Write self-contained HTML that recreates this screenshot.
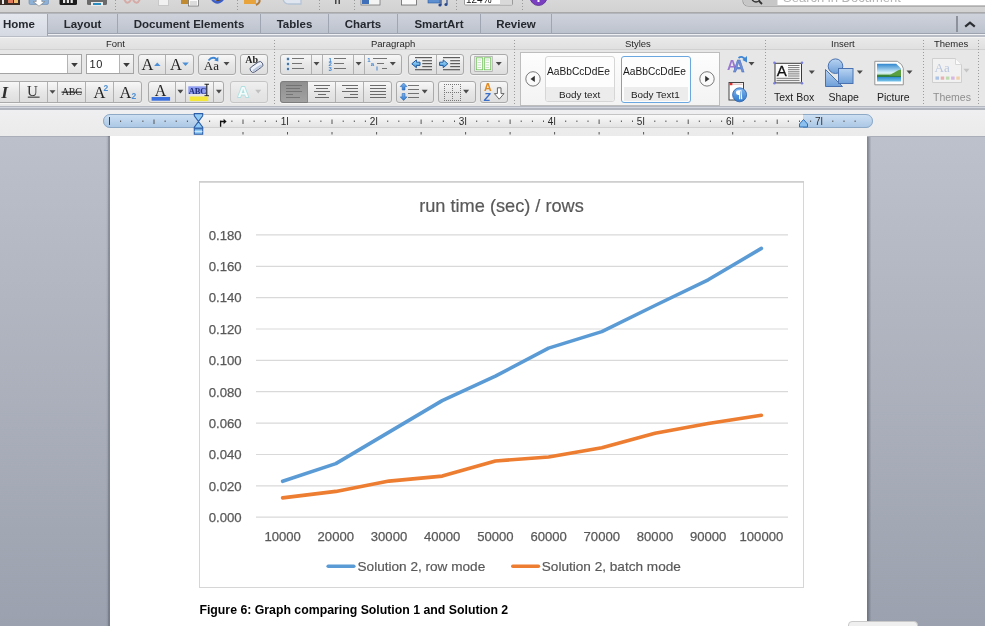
<!DOCTYPE html>
<html><head><meta charset="utf-8"><style>
*{margin:0;padding:0;box-sizing:border-box}
html,body{width:985px;height:626px;overflow:hidden;background:#e9e9e9;font-family:"Liberation Sans",sans-serif}
.a{position:absolute}
#wrap{position:absolute;left:0;top:0;width:985px;height:626px;overflow:hidden;will-change:transform;background:#e9e9e9}
#toolbar{left:0;top:0;width:985px;height:13px;background:linear-gradient(#d8d8d8,#d2d2d2);border-bottom:1px solid #a9a9a9}
#tabs{left:0;top:13px;width:985px;height:21px;background:linear-gradient(#ced2db,#bdc3ce);border-top:1px solid #b3b6bc;border-bottom:1px solid #9ea4af}
#tabunder{left:0;top:34px;width:985px;height:3px;background:linear-gradient(#eef0f4 0 1px,#b9bdc5 1px 3px)}
.tab{position:absolute;top:0;height:20px;font-weight:bold;font-size:11.5px;color:#25282e;line-height:21px;text-align:center;border-right:1px solid #a0a6b1}
#ribbon{left:0;top:37px;width:985px;height:69px;background:#e7e7e7;border-top:1px solid #f4f4f4}
#rhead{left:0;top:38px;width:985px;height:12px;background:linear-gradient(#e9e9e9,#e0e0e0);border-bottom:1px solid #d0d0d0}
.glab{position:absolute;top:37.7px;font-size:9.5px;color:#262626;line-height:12px;white-space:nowrap}
.btn{position:absolute;border:1px solid #aaaaaa;border-radius:3px;background:linear-gradient(#f7f7f7,#e6e6e6 55%,#dedede);box-shadow:0 1px 0 rgba(255,255,255,.6)}
.press{position:absolute;border:1px solid #7d7d7d;border-radius:3px 0 0 3px;background:linear-gradient(#8f8f8f,#a2a2a2)}
.split{position:absolute;width:1px;background:#b1b1b1}
.sep{position:absolute;top:40px;height:64px;width:1px;background:repeating-linear-gradient(#9c9c9c 0 1px,transparent 1px 3px)}
#ribbonbot{left:0;top:106px;width:985px;height:4px;background:linear-gradient(#b3b8c1 0 1px,#d3d6de 1px 2px,#b0b5be 2px 4px)}
#rulerbar{left:0;top:110px;width:985px;height:26px;background:linear-gradient(#efeff1,#ebebeb)}
#leftgray{left:0;top:136px;width:110px;height:490px;background:linear-gradient(#bcc0ca,#9ba1ae);border-top:1px solid #a9aeb8}
#rightgray{left:867px;top:136px;width:118px;height:490px;background:linear-gradient(90deg,rgba(60,64,76,.48),rgba(60,64,76,.36) 1.5px,rgba(60,64,76,.16) 3px,rgba(60,64,76,0) 4.5px),linear-gradient(#bdc1cb,#9ba1ae);border-top:1px solid #a9aeb8}
#page{left:110px;top:136px;width:757px;height:490px;background:#fff}
.lbl{position:absolute;font-size:10.5px;color:#1e1e1e;white-space:nowrap;line-height:12px}
</style></head><body><div id="wrap">
<div id="toolbar" class="a"></div>
<svg class="a" style="left:0;top:0" width="985" height="13" viewBox="0 0 985 13"><rect x="-1" y="-2" width="21" height="7" fill="#3a2e26"/><rect x="2" y="-2" width="2" height="6" fill="#e8e8e8"/><rect x="8" y="-2" width="5" height="5" fill="#e27a5d"/><rect x="14" y="-2" width="4" height="5" fill="#f0c070"/><rect x="29" y="-2" width="19.5" height="6.5" rx="1.5" fill="#8db0d6" stroke="#6a8ab0" stroke-width=".6"/><path d="M36.2,-2 h5.6 v3.6 h3 l-5.8,4.6 l-5.8,-4.6 h3z" fill="#fdfdfd" stroke="#7a7a7a" stroke-width=".6"/><rect x="59.5" y="-2" width="17.5" height="7" rx="1.5" fill="#1d1d1d"/><rect x="63" y="-2" width="2.2" height="5" fill="#e8e8e8"/><rect x="66.8" y="-2" width="2.2" height="5" fill="#e8e8e8"/><rect x="70.6" y="-2" width="2.2" height="5" fill="#e8e8e8"/><rect x="87" y="-2" width="20" height="7" rx="1.5" fill="#6b6b6b"/><rect x="91" y="2" width="12" height="4" fill="#eaeaea"/><rect x="93" y="3" width="8" height="2" fill="#2a8cc0"/><line x1="115.5" y1="0" x2="115.5" y2="12" stroke="#9a9a9a" stroke-dasharray="1 2"/><path d="M124,-1 q3,7 7,1 M140,-1 q-3,7 -7,1" stroke="#d6aaa6" stroke-width="2" fill="none"/><rect x="158.5" y="-2" width="10" height="7.5" fill="#f1f1f1" stroke="#c8c8c8"/><rect x="181" y="-2" width="11" height="6" fill="#c08a30"/><rect x="188.5" y="-1" width="10" height="7" fill="#fafafa" stroke="#666" stroke-width=".7"/><line x1="190" y1="2" x2="197" y2="2" stroke="#999" stroke-width=".6"/><line x1="190" y1="4" x2="197" y2="4" stroke="#999" stroke-width=".6"/><path d="M210.5,-1 q7,10 15,-1 l-2,0 q-6,5 -11,1z" fill="#3d5fc8"/><path d="M213,-2 q5,6 10,0z" fill="#5a3a1e"/><line x1="237.5" y1="0" x2="237.5" y2="12" stroke="#9a9a9a" stroke-dasharray="1 2"/><rect x="244" y="-2" width="12" height="6" fill="#e8a43a"/><path d="M258,-2 q4,4 -2,7" stroke="#b07a3a" stroke-width="2" fill="none"/><path d="M283,-1 q1,5 6,5 h12 v-6" stroke="#b5c3d6" stroke-width="1.3" fill="#dfe6ef"/><line x1="319.5" y1="0" x2="319.5" y2="12" stroke="#9a9a9a" stroke-dasharray="1 2"/><rect x="335" y="-2" width="1.5" height="6" fill="#444"/><rect x="338.5" y="-2" width="1.5" height="6" fill="#444"/><line x1="354.5" y1="0" x2="354.5" y2="12" stroke="#9a9a9a" stroke-dasharray="1 2"/><rect x="361" y="-2" width="19" height="7" fill="#f4f4f4" stroke="#777" stroke-width=".8"/><rect x="362" y="-2" width="7" height="6" fill="#3f6fb8"/><rect x="401.5" y="-2" width="15" height="7" fill="#fafafa" stroke="#666" stroke-width=".8"/><rect x="428" y="-2" width="12" height="5" fill="#5c8ed0" stroke="#2a5aa0" stroke-width=".6"/><path d="M441,5 v-7 M447,4 v-7" stroke="#2a4a90" stroke-width="1.2"/><circle cx="440" cy="5" r="1.6" fill="#2a4a90"/><circle cx="446" cy="4.5" r="1.6" fill="#2a4a90"/><line x1="456.5" y1="0" x2="456.5" y2="12" stroke="#9a9a9a" stroke-dasharray="1 2"/><rect x="464.5" y="-3" width="48" height="8" rx="1" fill="#fff" stroke="#9a9a9a"/><rect x="500" y="-2" width="12" height="6.5" fill="#d9d9d9"/><text x="466" y="3" font-size="10" fill="#222" font-family="Liberation Sans">124%</text><line x1="522.5" y1="0" x2="522.5" y2="12" stroke="#9a9a9a" stroke-dasharray="1 2"/><circle cx="538.5" cy="-3" r="8.5" fill="#7a3fc0" stroke="#5a2a90" stroke-width=".8"/><rect x="537.5" y="-2" width="2" height="4" fill="#fff"/><path d="M743,-4 v5 q0,5 6,5 h240 v-10z" fill="#fff" stroke="#8a8a8a" stroke-width="1"/><path d="M743.5,-4 v5 q0,5 6,5 h28 v-10z" fill="#c7c7c7"/><circle cx="756" cy="-2" r="4" fill="none" stroke="#333" stroke-width="1.5"/><line x1="759" y1="1" x2="762" y2="4" stroke="#333" stroke-width="1.8"/><text x="783" y="2" font-size="13" fill="#b5b5b5" font-family="Liberation Sans">Search in Document</text></svg>
<div id="tabs" class="a">
  <div class="tab" style="left:-9px;width:57px;height:22px;background:linear-gradient(#e4e7ee,#d5d9e2);z-index:2">Home</div>
  <div class="tab" style="left:48px;width:70px">Layout</div>
  <div class="tab" style="left:118px;width:143px">Document Elements</div>
  <div class="tab" style="left:261px;width:68px">Tables</div>
  <div class="tab" style="left:329px;width:69px">Charts</div>
  <div class="tab" style="left:398px;width:83px">SmartArt</div>
  <div class="tab" style="left:481px;width:71px">Review</div>
  <div class="a" style="left:956px;top:2px;width:1.5px;height:16px;background:#8c919b"></div>
  <svg class="a" style="left:962px;top:5px" width="16" height="12"><path d="M3.2,7.6 L8,3.6 L12.8,7.6" fill="none" stroke="#2b2e33" stroke-width="2.2"/></svg>
</div>
<div id="tabunder" class="a"></div>
<div id="ribbon" class="a"></div>
<div id="rhead" class="a"></div>
<div class="glab" style="left:106px">Font</div>
<div class="glab" style="left:371px">Paragraph</div>
<div class="glab" style="left:625px">Styles</div>
<div class="glab" style="left:831px">Insert</div>
<div class="glab" style="left:934px">Themes</div>
<div class="sep" style="left:274px"></div>
<div class="sep" style="left:514px"></div>
<div class="sep" style="left:765px"></div>
<div class="sep" style="left:923px"></div>
<div class="sep" style="left:978px"></div>
<div class="a" style="left:-3px;top:54px;width:85px;height:20px;border:1px solid #a4a4a4;background:#fff"></div>
<div class="a" style="left:67px;top:55px;width:14px;height:18px;border-left:1px solid #b4b4b4;background:linear-gradient(#f7f7f7,#e3e3e3)"></div>
<div class="a" style="left:86px;top:54px;width:48px;height:20px;border:1px solid #a4a4a4;background:#fff"></div>
<div class="a" style="left:119px;top:55px;width:14px;height:18px;border-left:1px solid #b4b4b4;background:linear-gradient(#f7f7f7,#e3e3e3)"></div>
<div class="a" style="left:89.5px;top:56.5px;font-size:11px;color:#222;line-height:14px;letter-spacing:.6px">10</div>
<div class="btn" style="left:138px;top:54px;width:56px;height:21px"></div><div class="split" style="left:165px;top:55px;height:19px"></div>
<div class="btn" style="left:198px;top:54px;width:38px;height:21px"></div>
<div class="btn" style="left:240px;top:54px;width:28px;height:21px"></div>
<div class="btn" style="left:280px;top:54px;width:122px;height:21px"></div><div class="split" style="left:311px;top:55px;height:19px"></div><div class="split" style="left:322px;top:55px;height:19px"></div><div class="split" style="left:353px;top:55px;height:19px"></div><div class="split" style="left:364px;top:55px;height:19px"></div>
<div class="btn" style="left:408px;top:54px;width:56px;height:21px"></div><div class="split" style="left:436px;top:55px;height:19px"></div>
<div class="btn" style="left:470px;top:54px;width:38px;height:21px"></div>
<div class="btn" style="left:-4px;top:81px;width:146px;height:22px"></div><div class="split" style="left:19px;top:82px;height:20px"></div><div class="split" style="left:47px;top:82px;height:20px"></div><div class="split" style="left:57px;top:82px;height:20px"></div><div class="split" style="left:85px;top:82px;height:20px"></div><div class="split" style="left:113px;top:82px;height:20px"></div>
<div class="btn" style="left:148px;top:81px;width:76px;height:22px"></div><div class="split" style="left:175px;top:82px;height:20px"></div><div class="split" style="left:185px;top:82px;height:20px"></div><div class="split" style="left:213px;top:82px;height:20px"></div>
<div class="btn" style="left:230px;top:81px;width:38px;height:22px;opacity:.55"></div>
<div class="btn" style="left:280px;top:81px;width:112px;height:22px"></div><div class="press" style="left:280px;top:81px;width:28px;height:22px"></div><div class="split" style="left:335px;top:82px;height:20px"></div><div class="split" style="left:363px;top:82px;height:20px"></div>
<div class="split" style="left:307px;top:82px;height:20px;background:#8a8a8a"></div>
<div class="btn" style="left:396px;top:81px;width:38px;height:22px"></div>
<div class="btn" style="left:438px;top:81px;width:38px;height:22px"></div>
<div class="btn" style="left:480px;top:81px;width:28px;height:22px"></div>
<div class="a" style="left:520px;top:52px;width:200px;height:54px;border:1px solid #bdbdbd;background:linear-gradient(#fdfdfd,#f3f3f3)"></div>
<div class="a" style="left:545px;top:56px;width:70px;height:46px;border:1px solid #d6d6d6;border-radius:3px;background:#fdfdfd;overflow:hidden"><div class="a" style="left:0;top:30px;width:68px;height:15px;background:#ececec"></div></div>
<div class="a" style="left:621px;top:56px;width:70px;height:47px;border:1.5px solid #6aa6e0;border-radius:3px;background:#fdfdfd;overflow:hidden"><div class="a" style="left:2px;top:30px;width:64px;height:14px;background:#ececec"></div></div>
<div class="a" style="left:547px;top:66px;font-size:10.2px;color:#1a1a1a;line-height:12px">AaBbCcDdEe</div>
<div class="a" style="left:623px;top:66px;font-size:10.2px;color:#1a1a1a;line-height:12px">AaBbCcDdEe</div>
<div class="a" style="left:559px;top:89px;font-size:9.9px;color:#222;line-height:12px">Body text</div>
<div class="a" style="left:631px;top:89px;font-size:9.9px;color:#222;line-height:12px">Body Text1</div>
<svg class="a" style="left:0;top:36px" width="985" height="72" viewBox="0 36 985 72"><defs><linearGradient id="gb" x1="0" y1="0" x2="0" y2="1"><stop offset="0" stop-color="#7fb6ef"/><stop offset="1" stop-color="#2d78cc"/></linearGradient><linearGradient id="gcy" x1="0" y1="0" x2="0" y2="1"><stop offset="0" stop-color="#b5e6fb"/><stop offset="1" stop-color="#3a92dc"/></linearGradient><linearGradient id="gsh" x1="0" y1="0" x2="0" y2="1"><stop offset="0" stop-color="#b8d3f2"/><stop offset="1" stop-color="#6e9fd8"/></linearGradient><linearGradient id="gpic" x1="0" y1="0" x2="0" y2="1"><stop offset="0" stop-color="#2f86d0"/><stop offset=".5" stop-color="#d8f1f9"/><stop offset=".58" stop-color="#c4e4d0"/><stop offset=".64" stop-color="#3f8a35"/><stop offset=".74" stop-color="#2a7a48"/><stop offset=".76" stop-color="#3590d0"/><stop offset="1" stop-color="#7cc6ec"/></linearGradient></defs><polygon points="71.2,63.0 77.8,63.0 74.5,67.0" fill="#3a3a3a"/><polygon points="123.2,63.0 129.8,63.0 126.5,67.0" fill="#3a3a3a"/><text x="141.5" y="69.8" font-size="16.5" font-family="Liberation Serif" fill="#222">A</text><polygon points="154.1,66.1 160.6,66.1 157.3,62.5" fill="#4d8fd6"/><text x="170" y="69.8" font-size="16.5" font-family="Liberation Serif" fill="#222">A</text><polygon points="182.2,62.5 188.8,62.5 185.5,66.1" fill="#4d8fd6"/><text x="203.8" y="69.6" font-size="13" font-family="Liberation Serif" fill="#222">Aa</text><path d="M208.5,60.5 q3.5,-4.5 8,-1.5" fill="none" stroke="#3f86d3" stroke-width="1.8"/><polygon points="218.3,56.8 218.3,61.6 214.3,60.6" fill="#3f86d3"/><polygon points="223.5,62.0 229.5,62.0 226.5,65.6" fill="#4a4a4a"/><text x="245.3" y="63.2" font-size="10" font-weight="bold" font-family="Liberation Serif" fill="#222">Ab</text><g transform="rotate(-35 256.5 67)"><rect x="249.5" y="64" width="14" height="6" rx="2.8" fill="#eef2fa" stroke="#4a5570" stroke-width=".9"/><rect x="251" y="67.3" width="11" height="2" rx="1" fill="#b9c7de"/></g><circle cx="288" cy="59" r="2" fill="#cfe6fa"/><circle cx="288" cy="59" r="1.2" fill="#4f7196"/><circle cx="288" cy="64" r="2" fill="#cfe6fa"/><circle cx="288" cy="64" r="1.2" fill="#4f7196"/><circle cx="288" cy="69" r="2" fill="#cfe6fa"/><circle cx="288" cy="69" r="1.2" fill="#4f7196"/><line x1="292" y1="58.5" x2="304" y2="58.5" stroke="#555" stroke-width="1" stroke-opacity=".8"/><line x1="292" y1="63.5" x2="302" y2="63.5" stroke="#555" stroke-width="1" stroke-opacity=".8"/><line x1="292" y1="68.5" x2="304" y2="68.5" stroke="#555" stroke-width="1" stroke-opacity=".8"/><polygon points="313.5,62.0 319.5,62.0 316.5,65.6" fill="#4a4a4a"/><text x="330.2" y="61.5" font-size="6" font-weight="bold" font-family="Liberation Sans" fill="#3f86d3" text-anchor="middle">1</text><text x="330.2" y="66" font-size="6" font-weight="bold" font-family="Liberation Sans" fill="#3f86d3" text-anchor="middle">2</text><text x="330.2" y="70.6" font-size="6" font-weight="bold" font-family="Liberation Sans" fill="#3f86d3" text-anchor="middle">3</text><line x1="334" y1="58.5" x2="346" y2="58.5" stroke="#555" stroke-width="1" stroke-opacity=".8"/><line x1="334" y1="63.5" x2="344" y2="63.5" stroke="#555" stroke-width="1" stroke-opacity=".8"/><line x1="334" y1="68.5" x2="346" y2="68.5" stroke="#555" stroke-width="1" stroke-opacity=".8"/><polygon points="355.6,62.0 361.6,62.0 358.6,65.6" fill="#4a4a4a"/><text x="369" y="61.5" font-size="6" font-weight="bold" font-family="Liberation Sans" fill="#3f86d3" text-anchor="middle">1</text><text x="372.5" y="66" font-size="6" font-weight="bold" font-family="Liberation Sans" fill="#3f86d3" text-anchor="middle">a</text><rect x="376.5" y="66.5" width="1" height="4" fill="#3f86d3"/><line x1="373" y1="58.5" x2="387" y2="58.5" stroke="#555" stroke-width="1" stroke-opacity=".8"/><line x1="377" y1="63.5" x2="384" y2="63.5" stroke="#555" stroke-width="1" stroke-opacity=".8"/><line x1="382" y1="68.5" x2="387" y2="68.5" stroke="#555" stroke-width="1" stroke-opacity=".8"/><polygon points="389.8,62.0 395.8,62.0 392.8,65.6" fill="#4a4a4a"/><line x1="415" y1="57.6" x2="432" y2="57.6" stroke="#5c5c5c" stroke-width="1.2"/><line x1="443" y1="57.6" x2="460" y2="57.6" stroke="#5c5c5c" stroke-width="1.2"/><line x1="415" y1="69.7" x2="432" y2="69.7" stroke="#5c5c5c" stroke-width="1.2"/><line x1="443" y1="69.7" x2="460" y2="69.7" stroke="#5c5c5c" stroke-width="1.2"/><line x1="422.3" y1="60.7" x2="432" y2="60.7" stroke="#5c5c5c" stroke-width="1.2"/><line x1="450.2" y1="60.7" x2="460" y2="60.7" stroke="#5c5c5c" stroke-width="1.2"/><line x1="422.3" y1="63.6" x2="432" y2="63.6" stroke="#5c5c5c" stroke-width="1.2"/><line x1="450.2" y1="63.6" x2="460" y2="63.6" stroke="#5c5c5c" stroke-width="1.2"/><line x1="422.3" y1="66.6" x2="432" y2="66.6" stroke="#5c5c5c" stroke-width="1.2"/><line x1="450.2" y1="66.6" x2="460" y2="66.6" stroke="#5c5c5c" stroke-width="1.2"/><path d="M411.8,63.8 l4.6,-3.9 v2.3 h3.6 v3.2 h-3.6 v2.3z" fill="url(#gcy)" stroke="#1d5aa0" stroke-width="1" stroke-linejoin="round"/><path d="M447.8,63.8 l-4.6,-3.9 v2.3 h-3.6 v3.2 h3.6 v2.3z" fill="url(#gcy)" stroke="#1d5aa0" stroke-width="1" stroke-linejoin="round"/><rect x="474.8" y="56.3" width="17.4" height="15" fill="#fbfbfb" stroke="#9a9a9a" stroke-width=".7"/><rect x="476.3" y="57.8" width="6.4" height="12" fill="none" stroke="#6cbf55" stroke-width=".8"/><rect x="484.3" y="57.8" width="6.4" height="12" fill="none" stroke="#6cbf55" stroke-width=".8"/><line x1="477.5" y1="60" x2="481" y2="60" stroke="#a9cfa0" stroke-width="0.6"/><line x1="485.5" y1="60" x2="489" y2="60" stroke="#a9cfa0" stroke-width="0.6"/><line x1="477.5" y1="62.5" x2="481" y2="62.5" stroke="#a9cfa0" stroke-width="0.6"/><line x1="485.5" y1="62.5" x2="489" y2="62.5" stroke="#a9cfa0" stroke-width="0.6"/><line x1="477.5" y1="65" x2="481" y2="65" stroke="#a9cfa0" stroke-width="0.6"/><line x1="485.5" y1="65" x2="489" y2="65" stroke="#a9cfa0" stroke-width="0.6"/><line x1="477.5" y1="67.5" x2="481" y2="67.5" stroke="#a9cfa0" stroke-width="0.6"/><line x1="485.5" y1="67.5" x2="489" y2="67.5" stroke="#a9cfa0" stroke-width="0.6"/><polygon points="495.8,62.0 501.8,62.0 498.8,65.6" fill="#4a4a4a"/><text x="1.2" y="97.7" font-size="17.5" font-style="italic" font-weight="bold" font-family="Liberation Serif" fill="#2e2e2e">I</text><text x="27" y="95.6" font-size="15" font-family="Liberation Serif" fill="#333">U</text><rect x="27.8" y="96.6" width="11.8" height="1.1" fill="#333"/><polygon points="49.5,90.2 55.5,90.2 52.5,93.8" fill="#4a4a4a"/><text x="61.8" y="95.4" font-size="10" font-family="Liberation Serif" fill="#222" textLength="20">ABC</text><rect x="61.5" y="91.6" width="20.5" height="1.1" fill="#222"/><text x="93.5" y="97.7" font-size="16.5" font-family="Liberation Serif" fill="#222">A</text><text x="103.6" y="90.6" font-size="8.5" font-weight="bold" font-family="Liberation Sans" fill="#4d8fd6">2</text><text x="119.6" y="97.7" font-size="16.5" font-family="Liberation Serif" fill="#222">A</text><text x="131.4" y="98.9" font-size="8.5" font-weight="bold" font-family="Liberation Sans" fill="#4d8fd6">2</text><text x="154.8" y="95.8" font-size="16" font-family="Liberation Serif" fill="#222">A</text><rect x="151.6" y="97" width="18.5" height="3.7" fill="#3a6fe0"/><polygon points="177.4,89.8 183.4,89.8 180.4,93.4" fill="#4a4a4a"/><rect x="188.3" y="86.3" width="18.5" height="7.6" fill="#8d9cf0"/><text x="188.8" y="93.6" font-size="8.5" font-weight="bold" font-family="Liberation Serif" fill="#22307a" textLength="17.5">ABC</text><path d="M204.5,84.3 h4.5 M206.8,84.3 v11.5 M204.5,95.8 h4.5" stroke="#222" stroke-width="1.1" fill="none"/><rect x="189.9" y="96.5" width="18.4" height="4.6" fill="#f3e83a"/><polygon points="215.9,89.8 221.9,89.8 218.9,93.4" fill="#4a4a4a"/><text x="237.8" y="96.5" font-size="15" font-weight="bold" font-family="Liberation Sans" fill="#f4fbfb" stroke="#b2e0e0" stroke-width="1.8" paint-order="stroke">A</text><polygon points="255.2,89.8 261.2,89.8 258.2,93.4" fill="#c0c0c0"/><line x1="286" y1="85.5" x2="302" y2="85.5" stroke="#6a6a6a" stroke-width="1" stroke-opacity=".8"/><line x1="286" y1="88.5" x2="300" y2="88.5" stroke="#6a6a6a" stroke-width="1" stroke-opacity=".8"/><line x1="286" y1="91.5" x2="302" y2="91.5" stroke="#6a6a6a" stroke-width="1" stroke-opacity=".8"/><line x1="286" y1="94.5" x2="293" y2="94.5" stroke="#6a6a6a" stroke-width="1" stroke-opacity=".8"/><line x1="286" y1="97.5" x2="300" y2="97.5" stroke="#6a6a6a" stroke-width="1" stroke-opacity=".8"/><line x1="314" y1="85.5" x2="330" y2="85.5" stroke="#4a4a4a" stroke-width="1" stroke-opacity=".8"/><line x1="316" y1="88.5" x2="328" y2="88.5" stroke="#4a4a4a" stroke-width="1" stroke-opacity=".8"/><line x1="314" y1="91.5" x2="330" y2="91.5" stroke="#4a4a4a" stroke-width="1" stroke-opacity=".8"/><line x1="318" y1="94.5" x2="326" y2="94.5" stroke="#4a4a4a" stroke-width="1" stroke-opacity=".8"/><line x1="315" y1="97.5" x2="329" y2="97.5" stroke="#4a4a4a" stroke-width="1" stroke-opacity=".8"/><line x1="342" y1="85.5" x2="358" y2="85.5" stroke="#4a4a4a" stroke-width="1" stroke-opacity=".8"/><line x1="346" y1="88.5" x2="358" y2="88.5" stroke="#4a4a4a" stroke-width="1" stroke-opacity=".8"/><line x1="342" y1="91.5" x2="358" y2="91.5" stroke="#4a4a4a" stroke-width="1" stroke-opacity=".8"/><line x1="350" y1="94.5" x2="358" y2="94.5" stroke="#4a4a4a" stroke-width="1" stroke-opacity=".8"/><line x1="344" y1="97.5" x2="358" y2="97.5" stroke="#4a4a4a" stroke-width="1" stroke-opacity=".8"/><line x1="370" y1="85.5" x2="386" y2="85.5" stroke="#4a4a4a" stroke-width="1" stroke-opacity=".8"/><line x1="370" y1="88.5" x2="386" y2="88.5" stroke="#4a4a4a" stroke-width="1" stroke-opacity=".8"/><line x1="370" y1="91.5" x2="386" y2="91.5" stroke="#4a4a4a" stroke-width="1" stroke-opacity=".8"/><line x1="370" y1="94.5" x2="386" y2="94.5" stroke="#4a4a4a" stroke-width="1" stroke-opacity=".8"/><line x1="370" y1="97.5" x2="386" y2="97.5" stroke="#4a4a4a" stroke-width="1" stroke-opacity=".8"/><path d="M403.6,83 l3.4,3.6 h-2 v3.4 h-2.8 v-3.4 h-2z" fill="url(#gb)" stroke="#2a6ab8" stroke-width=".6"/><path d="M403.6,100.5 l3.4,-3.6 h-2 v-3.4 h-2.8 v3.4 h-2z" fill="url(#gb)" stroke="#2a6ab8" stroke-width=".6"/><line x1="408" y1="85.5" x2="419" y2="85.5" stroke="#555" stroke-width="1" stroke-opacity=".8"/><line x1="408" y1="89.5" x2="419" y2="89.5" stroke="#555" stroke-width="1" stroke-opacity=".8"/><line x1="408" y1="93.5" x2="419" y2="93.5" stroke="#555" stroke-width="1" stroke-opacity=".8"/><line x1="408" y1="97.5" x2="419" y2="97.5" stroke="#555" stroke-width="1" stroke-opacity=".8"/><polygon points="421.7,89.8 427.7,89.8 424.7,93.4" fill="#4a4a4a"/><g fill="#777"><rect x="444" y="84" width="1" height="1"/><rect x="444" y="86" width="1" height="1"/><rect x="444" y="88" width="1" height="1"/><rect x="444" y="90" width="1" height="1"/><rect x="444" y="92" width="1" height="1"/><rect x="444" y="94" width="1" height="1"/><rect x="444" y="96" width="1" height="1"/><rect x="444" y="98" width="1" height="1"/><rect x="444" y="100" width="1" height="1"/><rect x="446" y="84" width="1" height="1"/><rect x="446" y="92" width="1" height="1"/><rect x="446" y="100" width="1" height="1"/><rect x="448" y="84" width="1" height="1"/><rect x="448" y="92" width="1" height="1"/><rect x="448" y="100" width="1" height="1"/><rect x="450" y="84" width="1" height="1"/><rect x="450" y="92" width="1" height="1"/><rect x="450" y="100" width="1" height="1"/><rect x="452" y="84" width="1" height="1"/><rect x="452" y="86" width="1" height="1"/><rect x="452" y="88" width="1" height="1"/><rect x="452" y="90" width="1" height="1"/><rect x="452" y="92" width="1" height="1"/><rect x="452" y="94" width="1" height="1"/><rect x="452" y="96" width="1" height="1"/><rect x="452" y="98" width="1" height="1"/><rect x="452" y="100" width="1" height="1"/><rect x="454" y="84" width="1" height="1"/><rect x="454" y="92" width="1" height="1"/><rect x="454" y="100" width="1" height="1"/><rect x="456" y="84" width="1" height="1"/><rect x="456" y="92" width="1" height="1"/><rect x="456" y="100" width="1" height="1"/><rect x="458" y="84" width="1" height="1"/><rect x="458" y="92" width="1" height="1"/><rect x="458" y="100" width="1" height="1"/><rect x="460" y="84" width="1" height="1"/><rect x="460" y="86" width="1" height="1"/><rect x="460" y="88" width="1" height="1"/><rect x="460" y="90" width="1" height="1"/><rect x="460" y="92" width="1" height="1"/><rect x="460" y="94" width="1" height="1"/><rect x="460" y="96" width="1" height="1"/><rect x="460" y="98" width="1" height="1"/><rect x="460" y="100" width="1" height="1"/></g><polygon points="463.1,89.8 469.1,89.8 466.1,93.4" fill="#4a4a4a"/><text x="484" y="90.6" font-size="10.5" font-weight="bold" font-family="Liberation Sans" fill="#e08a22">A</text><text x="484" y="100.6" font-size="10.5" font-weight="bold" font-style="italic" font-family="Liberation Sans" fill="#3b6ec8">Z</text><path d="M497.4,87.8 h3.6 v5.8 h3 l-4.8,5.6 l-4.8,-5.6 h3z" fill="#fff" stroke="#555" stroke-width=".9"/><circle cx="533" cy="78.9" r="7.2" fill="#fafafa" stroke="#7a7a7a" stroke-width="1"/><polygon points="530.5,78.9 534.8,75.8 534.8,82" fill="#333"/><circle cx="707" cy="78.9" r="7.2" fill="#fafafa" stroke="#7a7a7a" stroke-width="1"/><polygon points="709.5,78.9 705.2,75.8 705.2,82" fill="#333"/><text x="727" y="69.5" font-size="14" font-weight="bold" font-family="Liberation Sans" fill="#9a78d0">A</text><text x="733" y="72.4" font-size="16" font-weight="bold" font-family="Liberation Sans" fill="#6f8fd8" stroke="#4468b8" stroke-width=".4">A</text><path d="M738.5,58 q4,-3 7.5,2.5" fill="none" stroke="#3f86d3" stroke-width="1.8"/><polygon points="747,56 747,62.5 742.5,60" fill="#3f86d3"/><polygon points="748.5,62.0 754.5,62.0 751.5,65.6" fill="#4a4a4a"/><rect x="729" y="82.5" width="14.5" height="17.5" fill="#fff" stroke="#444" stroke-width="1"/><rect x="729.5" y="83" width="3" height="2.2" fill="#d33"/><line x1="733" y1="84.2" x2="742.5" y2="84.2" stroke="#c88" stroke-width=".6"/><circle cx="739.6" cy="94.8" r="7" fill="url(#gb)" stroke="#2a5eaa" stroke-width=".8"/><path d="M741.5,90.2 h-3.2 a2.4,2.4 0 0 0 0,4.8 h0.8 v4.3 h1.2 v-8.1 h0.8 v8.1 h1.2z" fill="#fff"/><rect x="775" y="63.3" width="26.5" height="19.5" fill="#fafafa" stroke="#3a3a3a" stroke-width="1"/><rect x="776" y="81.8" width="26" height="2" fill="#9a9a9a" opacity=".6"/><text x="776.8" y="76" font-size="15" font-family="Liberation Sans" fill="#111" stroke="#111" stroke-width=".3">A</text><line x1="788" y1="65.5" x2="799.5" y2="65.5" stroke="#555" stroke-width="0.8"/><line x1="788" y1="67.6" x2="799.5" y2="67.6" stroke="#555" stroke-width="0.8"/><line x1="788" y1="69.7" x2="799.5" y2="69.7" stroke="#555" stroke-width="0.8"/><line x1="788" y1="71.8" x2="799.5" y2="71.8" stroke="#555" stroke-width="0.8"/><line x1="788" y1="73.9" x2="799.5" y2="73.9" stroke="#555" stroke-width="0.8"/><line x1="788" y1="76" x2="799.5" y2="76" stroke="#555" stroke-width="0.8"/><line x1="776.5" y1="78.3" x2="799.5" y2="78.3" stroke="#555" stroke-width="0.8"/><line x1="776.5" y1="80.4" x2="799.5" y2="80.4" stroke="#555" stroke-width="0.8"/><circle cx="774.5" cy="62.8" r="1.3" fill="#7b7fe0"/><circle cx="802" cy="62.8" r="1.3" fill="#7b7fe0"/><circle cx="774.5" cy="83.3" r="1.3" fill="#7b7fe0"/><circle cx="802" cy="83.3" r="1.3" fill="#7b7fe0"/><polygon points="808.8,70.5 814.8,70.5 811.8,74.1" fill="#4a4a4a"/><path d="M825.5,86.5 v-17 l17,17z" fill="url(#gsh)" stroke="#4a72b0" stroke-width="1"/><circle cx="835.5" cy="66.2" r="7.3" fill="url(#gsh)" stroke="#4a72b0" stroke-width="1"/><rect x="838.5" y="68.5" width="14.5" height="15" fill="url(#gsh)" stroke="#4a72b0" stroke-width="1"/><polygon points="856.8,70.5 862.8,70.5 859.8,74.1" fill="#4a4a4a"/><path d="M874.8,61.3 h22.5 q5.5,3 6,7 v16.5 h-28.5z" fill="#fdfdfd" stroke="#8c8c8c" stroke-width=".9"/><path d="M877,63.8 h19.2 l4.8,4.6 v13.2 h-24z" fill="url(#gpic)"/><path d="M889,75.5 q5,-3 7,-4 q3,-2 5,-2 v6.5z" fill="#5aa040"/><polygon points="906.5,70.5 912.5,70.5 909.5,74.1" fill="#4a4a4a"/><path d="M932.5,58.5 h23 l6,6 v18 h-29z" fill="#f1f1f1" stroke="#cfcfcf" stroke-width="1"/><text x="934.5" y="71.5" font-size="13" font-family="Liberation Serif" fill="#b8c6dd">Aa</text><rect x="935.5" y="76.5" width="3.5" height="3.2" fill="#a9c4e6"/><rect x="940.7" y="76.5" width="3.5" height="3.2" fill="#e8b0b0"/><rect x="945.9" y="76.5" width="3.5" height="3.2" fill="#bcdcb0"/><rect x="951.1" y="76.5" width="3.5" height="3.2" fill="#d6b8e0"/><rect x="956.3" y="76.5" width="3.5" height="3.2" fill="#f0d0a8"/><path d="M955.5,58.5 v6 h6" fill="#fafafa" stroke="#d0d0d0" stroke-width=".8"/><polygon points="963.5,68.8 969.5,68.8 966.5,72.4" fill="#c4c4c4"/></svg>
<div class="lbl" style="left:774px;top:91px">Text Box</div>
<div class="lbl" style="left:828.5px;top:91px">Shape</div>
<div class="lbl" style="left:877px;top:91px">Picture</div>
<div class="lbl" style="left:933px;top:91px;color:#8e8e8e">Themes</div>
<div id="ribbonbot" class="a"></div>
<div id="rulerbar" class="a"></div>
<svg class="a" style="left:0;top:110px" width="985" height="26" viewBox="0 110 985 26"><defs><linearGradient id="rb" x1="0" y1="0" x2="0" y2="1"><stop offset="0" stop-color="#cfe1f4"/><stop offset="1" stop-color="#a9c6e4"/></linearGradient><linearGradient id="rw" x1="0" y1="0" x2="0" y2="1"><stop offset="0" stop-color="#fbfbfb"/><stop offset="1" stop-color="#e2e2e2"/></linearGradient><clipPath id="rc"><rect x="103" y="114" width="770" height="14" rx="7"/></clipPath></defs><rect x="103" y="114" width="770" height="14" rx="7" fill="url(#rb)"/><rect x="198.5" y="114" width="604.5" height="14" fill="url(#rw)" clip-path="url(#rc)"/><rect x="103.5" y="114.5" width="769" height="13" rx="6.5" fill="none" stroke="#8ea9c6" stroke-width="1"/><line x1="198.5" y1="114.5" x2="803" y2="114.5" stroke="#c4c4c4" stroke-width="1"/><line x1="198.5" y1="127.5" x2="803" y2="127.5" stroke="#d0d0d0" stroke-width="1"/><rect x="109.0" y="117" width="1" height="8" fill="#404040"/><rect x="120.1" y="120.5" width="1" height="1.5" fill="#555"/><rect x="131.2" y="120.5" width="1" height="1.5" fill="#555"/><rect x="142.4" y="120.5" width="1" height="1.5" fill="#555"/><rect x="153.5" y="119.5" width="1" height="4.5" fill="#555"/><rect x="164.6" y="120.5" width="1" height="1.5" fill="#555"/><rect x="175.7" y="120.5" width="1" height="1.5" fill="#555"/><rect x="186.9" y="120.5" width="1" height="1.5" fill="#555"/><rect x="209.1" y="120.5" width="1" height="1.5" fill="#555"/><rect x="220.3" y="120.5" width="1" height="1.5" fill="#555"/><rect x="231.4" y="120.5" width="1" height="1.5" fill="#555"/><rect x="242.5" y="119.5" width="1" height="4.5" fill="#555"/><rect x="253.6" y="120.5" width="1" height="1.5" fill="#555"/><rect x="264.8" y="120.5" width="1" height="1.5" fill="#555"/><rect x="275.9" y="120.5" width="1" height="1.5" fill="#555"/><rect x="287.0" y="117" width="1" height="8" fill="#404040"/><text x="283.5" y="125.3" font-size="10" font-family="Liberation Sans" fill="#2a2a2a" text-anchor="middle">1</text><rect x="298.2" y="120.5" width="1" height="1.5" fill="#555"/><rect x="309.3" y="120.5" width="1" height="1.5" fill="#555"/><rect x="320.4" y="120.5" width="1" height="1.5" fill="#555"/><rect x="331.5" y="119.5" width="1" height="4.5" fill="#555"/><rect x="342.7" y="120.5" width="1" height="1.5" fill="#555"/><rect x="353.8" y="120.5" width="1" height="1.5" fill="#555"/><rect x="364.9" y="120.5" width="1" height="1.5" fill="#555"/><rect x="376.1" y="117" width="1" height="8" fill="#404040"/><text x="372.6" y="125.3" font-size="10" font-family="Liberation Sans" fill="#2a2a2a" text-anchor="middle">2</text><rect x="387.2" y="120.5" width="1" height="1.5" fill="#555"/><rect x="398.3" y="120.5" width="1" height="1.5" fill="#555"/><rect x="409.4" y="120.5" width="1" height="1.5" fill="#555"/><rect x="420.6" y="119.5" width="1" height="4.5" fill="#555"/><rect x="431.7" y="120.5" width="1" height="1.5" fill="#555"/><rect x="442.8" y="120.5" width="1" height="1.5" fill="#555"/><rect x="454.0" y="120.5" width="1" height="1.5" fill="#555"/><rect x="465.1" y="117" width="1" height="8" fill="#404040"/><text x="461.6" y="125.3" font-size="10" font-family="Liberation Sans" fill="#2a2a2a" text-anchor="middle">3</text><rect x="476.2" y="120.5" width="1" height="1.5" fill="#555"/><rect x="487.3" y="120.5" width="1" height="1.5" fill="#555"/><rect x="498.5" y="120.5" width="1" height="1.5" fill="#555"/><rect x="509.6" y="119.5" width="1" height="4.5" fill="#555"/><rect x="520.7" y="120.5" width="1" height="1.5" fill="#555"/><rect x="531.9" y="120.5" width="1" height="1.5" fill="#555"/><rect x="543.0" y="120.5" width="1" height="1.5" fill="#555"/><rect x="554.1" y="117" width="1" height="8" fill="#404040"/><text x="550.6" y="125.3" font-size="10" font-family="Liberation Sans" fill="#2a2a2a" text-anchor="middle">4</text><rect x="565.2" y="120.5" width="1" height="1.5" fill="#555"/><rect x="576.4" y="120.5" width="1" height="1.5" fill="#555"/><rect x="587.5" y="120.5" width="1" height="1.5" fill="#555"/><rect x="598.6" y="119.5" width="1" height="4.5" fill="#555"/><rect x="609.8" y="120.5" width="1" height="1.5" fill="#555"/><rect x="620.9" y="120.5" width="1" height="1.5" fill="#555"/><rect x="632.0" y="120.5" width="1" height="1.5" fill="#555"/><rect x="643.1" y="117" width="1" height="8" fill="#404040"/><text x="639.6" y="125.3" font-size="10" font-family="Liberation Sans" fill="#2a2a2a" text-anchor="middle">5</text><rect x="654.3" y="120.5" width="1" height="1.5" fill="#555"/><rect x="665.4" y="120.5" width="1" height="1.5" fill="#555"/><rect x="676.5" y="120.5" width="1" height="1.5" fill="#555"/><rect x="687.7" y="119.5" width="1" height="4.5" fill="#555"/><rect x="698.8" y="120.5" width="1" height="1.5" fill="#555"/><rect x="709.9" y="120.5" width="1" height="1.5" fill="#555"/><rect x="721.1" y="120.5" width="1" height="1.5" fill="#555"/><rect x="732.2" y="117" width="1" height="8" fill="#404040"/><text x="728.7" y="125.3" font-size="10" font-family="Liberation Sans" fill="#2a2a2a" text-anchor="middle">6</text><rect x="743.3" y="120.5" width="1" height="1.5" fill="#555"/><rect x="754.4" y="120.5" width="1" height="1.5" fill="#555"/><rect x="765.6" y="120.5" width="1" height="1.5" fill="#555"/><rect x="776.7" y="119.5" width="1" height="4.5" fill="#555"/><rect x="787.8" y="120.5" width="1" height="1.5" fill="#555"/><rect x="799.0" y="120.5" width="1" height="1.5" fill="#555"/><rect x="810.1" y="120.5" width="1" height="1.5" fill="#555"/><rect x="821.2" y="117" width="1" height="8" fill="#404040"/><text x="817.7" y="125.3" font-size="10" font-family="Liberation Sans" fill="#2a2a2a" text-anchor="middle">7</text><rect x="832.3" y="120.5" width="1" height="1.5" fill="#555"/><rect x="843.5" y="120.5" width="1" height="1.5" fill="#555"/><rect x="854.6" y="120.5" width="1" height="1.5" fill="#555"/><rect x="242.5" y="132" width="1" height="2.5" fill="#555"/><rect x="287.0" y="132" width="1" height="2.5" fill="#555"/><rect x="331.5" y="132" width="1" height="2.5" fill="#555"/><rect x="376.1" y="132" width="1" height="2.5" fill="#555"/><rect x="420.6" y="132" width="1" height="2.5" fill="#555"/><rect x="465.1" y="132" width="1" height="2.5" fill="#555"/><rect x="509.6" y="132" width="1" height="2.5" fill="#555"/><rect x="554.1" y="132" width="1" height="2.5" fill="#555"/><rect x="598.6" y="132" width="1" height="2.5" fill="#555"/><rect x="643.1" y="132" width="1" height="2.5" fill="#555"/><rect x="687.7" y="132" width="1" height="2.5" fill="#555"/><rect x="732.2" y="132" width="1" height="2.5" fill="#555"/><rect x="776.7" y="132" width="1" height="2.5" fill="#555"/><path d="M194.3,113.6 h8.4 v2.2 l-4.2,5.7 l4.2,5.7 v0.9 h-8.4 v-0.9 l4.2,-5.7 l-4.2,-5.7z" fill="#92cbf3" stroke="#2d5ea8" stroke-width="1.1"/><rect x="194.3" y="128.8" width="8.4" height="5.4" fill="#92cbf3" stroke="#2d5ea8" stroke-width="1.1"/><line x1="194.5" y1="131.5" x2="202.5" y2="131.5" stroke="#d8eefc" stroke-width=".8"/><path d="M220.6,126.8 v-5.3 h3.6" fill="none" stroke="#111" stroke-width="1.3"/><path d="M223.6,118.8 l3,2.7 l-3,2.7z" fill="#111"/><path d="M799.5,127 v-3 l4,-4.5 l4,4.5 v3z" fill="#8cc0ee" stroke="#2f6fb5" stroke-width="1"/></svg>
<div id="leftgray" class="a"></div>
<div id="page" class="a"></div>
<div class="a" style="left:106px;top:136px;width:4px;height:490px;background:linear-gradient(90deg,rgba(50,56,70,0),rgba(50,56,70,.1) 1.5px,rgba(50,56,70,.32) 2.5px,rgba(50,56,70,.36))"></div>
<div id="rightgray" class="a"></div>
<!--CHART-->
<svg class="a" style="left:0;top:0" width="985" height="626" viewBox="0 0 985 626">
<rect x="199.5" y="181.5" width="604" height="406" fill="#fff" stroke="#d6d6d6" stroke-width="1"/><line x1="199" y1="182" x2="804" y2="182" stroke="#cdcdcd" stroke-width="1.6"/>
<g stroke="#d9d9d9" stroke-width="1.2">
<line x1="256" y1="517.2" x2="788" y2="517.2"/>
<line x1="256" y1="485.8" x2="788" y2="485.8"/>
<line x1="256" y1="454.5" x2="788" y2="454.5"/>
<line x1="256" y1="423.1" x2="788" y2="423.1"/>
<line x1="256" y1="391.7" x2="788" y2="391.7"/>
<line x1="256" y1="360.4" x2="788" y2="360.4"/>
<line x1="256" y1="329.0" x2="788" y2="329.0"/>
<line x1="256" y1="297.6" x2="788" y2="297.6"/>
<line x1="256" y1="266.3" x2="788" y2="266.3"/>
<line x1="256" y1="234.9" x2="788" y2="234.9"/>
</g>
<g font-family="Liberation Sans" font-size="13.2" fill="#595959" stroke="#595959" stroke-width=".25" text-anchor="end">
<text x="241.7" y="522.0">0.000</text>
<text x="241.7" y="490.6">0.020</text>
<text x="241.7" y="459.3">0.040</text>
<text x="241.7" y="427.9">0.060</text>
<text x="241.7" y="396.5">0.080</text>
<text x="241.7" y="365.2">0.100</text>
<text x="241.7" y="333.8">0.120</text>
<text x="241.7" y="302.4">0.140</text>
<text x="241.7" y="271.1">0.160</text>
<text x="241.7" y="239.7">0.180</text>
</g>
<g font-family="Liberation Sans" font-size="13.1" fill="#595959" stroke="#595959" stroke-width=".25" text-anchor="middle">
<text x="282.6" y="541">10000</text>
<text x="335.8" y="541">20000</text>
<text x="389.0" y="541">30000</text>
<text x="442.2" y="541">40000</text>
<text x="495.4" y="541">50000</text>
<text x="548.6" y="541">60000</text>
<text x="601.8" y="541">70000</text>
<text x="655.0" y="541">80000</text>
<text x="708.2" y="541">90000</text>
<text x="761.4" y="541">100000</text>
</g>
<text x="501.5" y="212.4" font-family="Liberation Sans" font-size="18.2" fill="#595959" stroke="#595959" stroke-width=".2" text-anchor="middle">run time (sec) / rows</text>
<polyline fill="none" stroke="#5b9bd5" stroke-width="3.6" stroke-linejoin="round" stroke-linecap="round" points="282.6,481.3 335.8,463.6 389,432.1 442.2,400.6 495.4,376.2 548.6,348.1 601.8,331.6 655,305.5 708.2,279.8 761.4,248.4"/>
<polyline fill="none" stroke="#ed7d31" stroke-width="3.6" stroke-linejoin="round" stroke-linecap="round" points="282.6,497.9 335.8,491.4 389,481.1 442.2,476.1 495.4,461 548.6,457 601.8,447.8 655,433.2 708.2,423.6 761.4,415.2"/>
<line x1="328.2" y1="566.3" x2="353.8" y2="566.3" stroke="#5b9bd5" stroke-width="3.6" stroke-linecap="round"/>
<line x1="512.8" y1="566.3" x2="538.4" y2="566.3" stroke="#ed7d31" stroke-width="3.6" stroke-linecap="round"/>
<g font-family="Liberation Sans" font-size="13.6" fill="#595959" stroke="#595959" stroke-width=".2">
<text x="357.5" y="570.6">Solution 2, row mode</text>
<text x="541.8" y="570.6">Solution 2, batch mode</text>
</g>
<text x="199.4" y="614.1" font-family="Liberation Sans" font-weight="bold" font-size="12.3" fill="#000">Figure 6: Graph comparing Solution 1 and Solution 2</text>
</svg>
<!--/CHART-->
<div class="a" style="left:848px;top:621px;width:70px;height:10px;border:1px solid #c9c9c9;border-radius:4px;background:#efefef"></div>
</div></body></html>
